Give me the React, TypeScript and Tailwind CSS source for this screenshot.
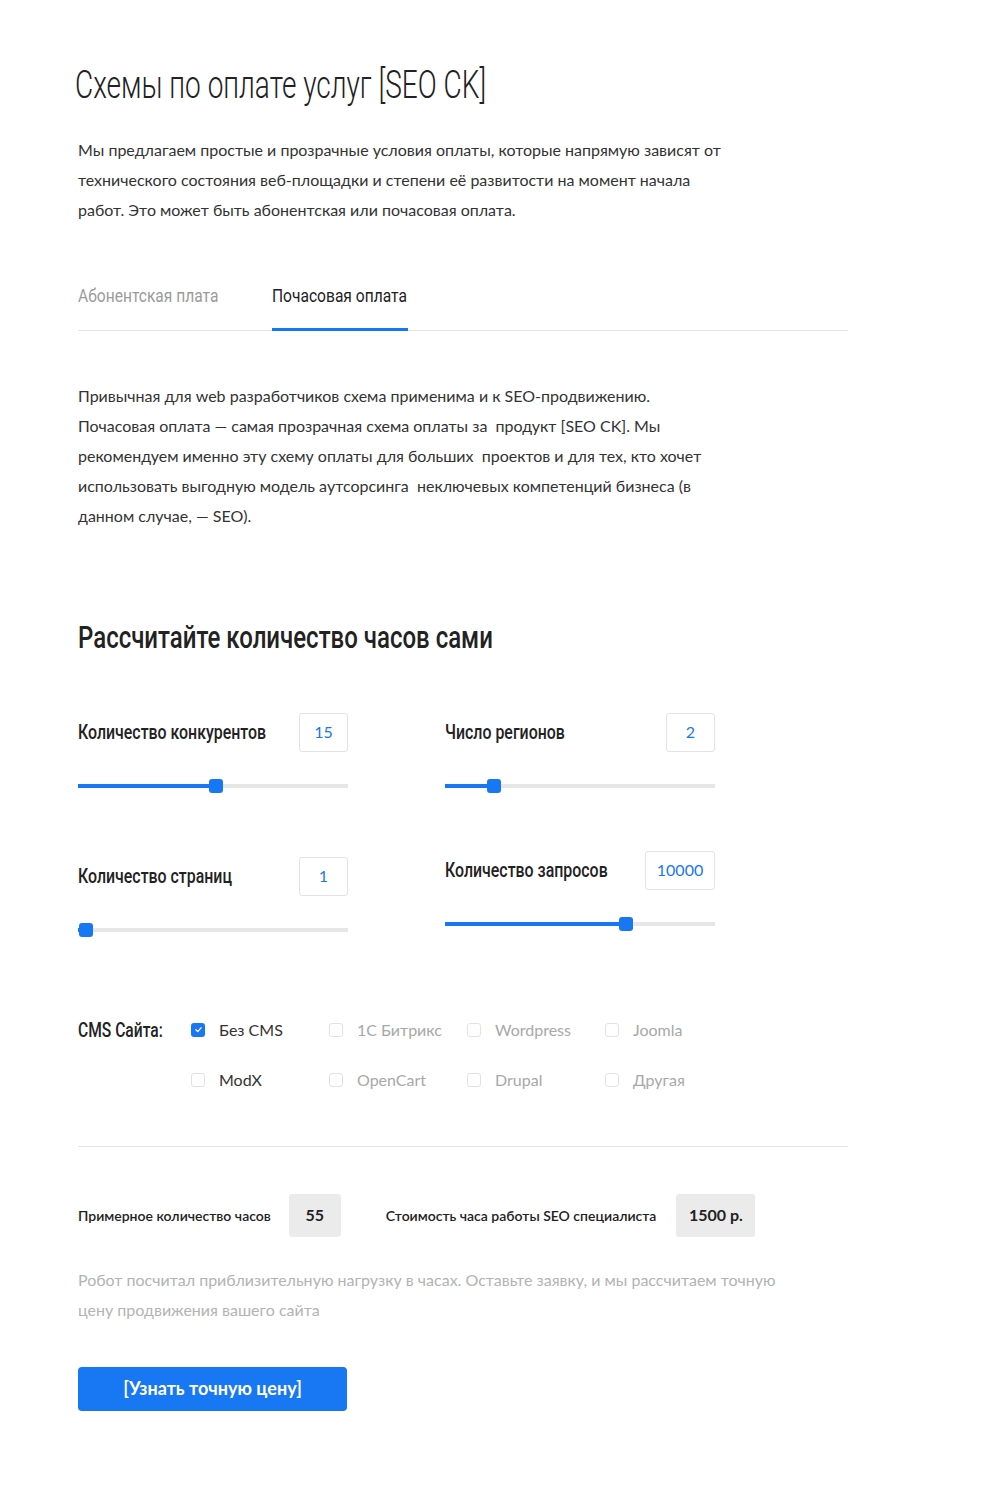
import React from 'react'

const cond = "[font-family:Roboto,'Liberation_Sans',sans-serif]"
const lato = "[font-family:Lato,'Liberation_Sans',sans-serif]"

function Slider({ pct }: { pct: number }) {
    return (
        <div className="relative h-[14px] w-[270px]">
            <div className="absolute left-0 right-0 top-[5px] h-[4px] bg-[#e6e6e6]" />
            <div className="absolute left-0 top-[5px] h-[4px] bg-[#1877f2]" style={{ width: `${pct}%` }} />
            <div
                className="absolute top-0 h-[14px] w-[14px] -translate-x-1/2 rounded-[3px] bg-[#1877f2]"
                style={{ left: `${pct}%` }}
            />
        </div>
    )
}

function Field({ label, value, pct, boxW = 'w-[49px]' }: { label: string; value: string; pct: number; boxW?: string }) {
    return (
        <div className="w-[270px]">
            <div className="flex items-center justify-between">
                <div className="min-w-0 flex-1">
                    <span className={`${cond} inline-block origin-left scale-x-[0.795] whitespace-nowrap text-[20px] font-medium text-[#222]`}>
                        {label}
                    </span>
                </div>
                <div className={`${lato} flex h-[39px] shrink-0 ${boxW} items-center justify-center rounded-[3px] border border-[#e3e3e3] text-[16px] text-[#1877f2]`}>
                    {value}
                </div>
            </div>
            <div className="mt-[27px]">
                <Slider pct={pct} />
            </div>
        </div>
    )
}

function Check({ label, checked }: { label: string; checked?: boolean }) {
    return (
        <div className="flex w-[138px] items-center gap-[14px]">
            {checked ? (
                <span className="flex h-[14px] w-[14px] items-center justify-center rounded-[3px] bg-[#1877f2]">
                    <svg width="9" height="9" viewBox="0 0 10 10" fill="none">
                        <path d="M2 5.2 4.2 7.3 8 3" stroke="white" strokeWidth="1.4" strokeLinecap="round" strokeLinejoin="round" />
                    </svg>
                </span>
            ) : (
                <span className="h-[14px] w-[14px] rounded-[3px] border border-[#e3e3e3]" />
            )}
            <span className={`${lato} text-[16px] ${checked || label === 'ModX' ? 'text-[#333]' : 'text-[#a8a8a8]'}`}>{label}</span>
        </div>
    )
}

export default function App() {
    return (
        <div className="min-h-[1500px] bg-white">
            <div className="pl-[78px] pt-[57px]">
                <h1 className={`${cond} -ml-[3px] inline-block origin-left scale-x-[0.737] whitespace-nowrap text-[38px] font-light text-[#222]`}>
                    Схемы по оплате услуг [SEO CK]
                </h1>

                <p className={`${lato} mt-[21px] w-[650px] text-[16px] leading-[30px] text-[#333]`}>
                    Мы предлагаем простые и прозрачные условия оплаты, которые напрямую зависят от технического состояния веб-площадки и степени её развитости на момент начала работ. Это может быть абонентская или почасовая оплата.
                </p>

                <div className="mt-[57px] flex w-[770px] border-b border-[#e3e3e3]">
                    <div className="w-[194px] pb-[19px]">
                        <span className={`${cond} inline-block origin-left scale-x-[0.82] whitespace-nowrap text-[19px] text-[#9a9a9a]`}>
                            Абонентская плата
                        </span>
                    </div>
                    <div className="-mb-px w-[136px] border-b-[3px] border-[#1877f2] pb-[17px]">
                        <span className={`${cond} inline-block origin-left scale-x-[0.82] whitespace-nowrap text-[19px] text-[#222]`}>
                            Почасовая оплата
                        </span>
                    </div>
                </div>

                <p className={`${lato} mt-[50px] w-[640px] text-[16px] leading-[30px] text-[#333]`}>
                    Привычная для web разработчиков схема применима и к SEO-продвижению. Почасовая оплата — самая прозрачная схема оплаты за&nbsp; продукт [SEO CK]. Мы рекомендуем именно эту схему оплаты для больших&nbsp; проектов и для тех, кто хочет использовать выгодную модель аутсорсинга&nbsp; неключевых компетенций бизнеса (в данном случае, — SEO).
                </p>

                <h2 className={`${cond} mt-[82px] inline-block origin-left scale-x-[0.75] whitespace-nowrap text-[32px] font-medium text-[#222]`}>
                    Рассчитайте количество часов сами
                </h2>

                <div className="mt-[52px] flex gap-[97px]">
                    <div className="flex flex-col">
                        <Field label="Количество конкурентов" value="15" pct={51} />
                        <div className="mt-[64px]">
                            <Field label="Количество страниц" value="1" pct={3} />
                        </div>
                    </div>
                    <div className="flex flex-col">
                        <Field label="Число регионов" value="2" pct={18} />
                        <div className="mt-[58px]">
                            <Field label="Количество запросов" value="10000" pct={67} boxW="w-[70px]" />
                        </div>
                    </div>
                </div>

                <div className="mt-[81px] flex">
                    <div className="w-[113px]">
                        <span className={`${cond} inline-block origin-left scale-x-[0.78] whitespace-nowrap text-[20px] font-medium leading-[24px] text-[#222]`}>
                            CMS Сайта:
                        </span>
                    </div>
                    <div className="grid grid-cols-4 gap-y-[26px]">
                        <Check label="Без CMS" checked />
                        <Check label="1С Битрикс" />
                        <Check label="Wordpress" />
                        <Check label="Joomla" />
                        <Check label="ModX" />
                        <Check label="OpenCart" />
                        <Check label="Drupal" />
                        <Check label="Другая" />
                    </div>
                </div>

                <div className="mt-[54px] w-[770px] border-t border-[#e3e3e3]" />

                <div className={`${lato} mt-[47px] flex items-center text-[14px] font-semibold text-[#222]`}>
                    <span>Примерное количество часов</span>
                    <div className="ml-[18px] flex h-[43px] w-[52px] items-center justify-center rounded-[3px] bg-[#ebebeb] text-[16px] font-bold">
                        55
                    </div>
                    <span className="ml-[45px]">Стоимость часа работы SEO специалиста</span>
                    <div className="ml-[20px] flex h-[43px] w-[79px] items-center justify-center rounded-[3px] bg-[#ebebeb] text-[16px] font-bold">
                        1500 р.
                    </div>
                </div>

                <p className={`${lato} mt-[28px] w-[700px] text-[16px] leading-[30px] text-[#b3b3b3]`}>
                    Робот посчитал приблизительную нагрузку в часах. Оставьте заявку, и мы рассчитаем точную цену продвижения вашего сайта
                </p>

                <button className={`${lato} mt-[42px] flex h-[44px] w-[269px] items-center justify-center rounded-[4px] bg-[#1877f2] text-[18px] font-bold text-white`}>
                    [Узнать точную цену]
                </button>
            </div>
        </div>
    )
}
